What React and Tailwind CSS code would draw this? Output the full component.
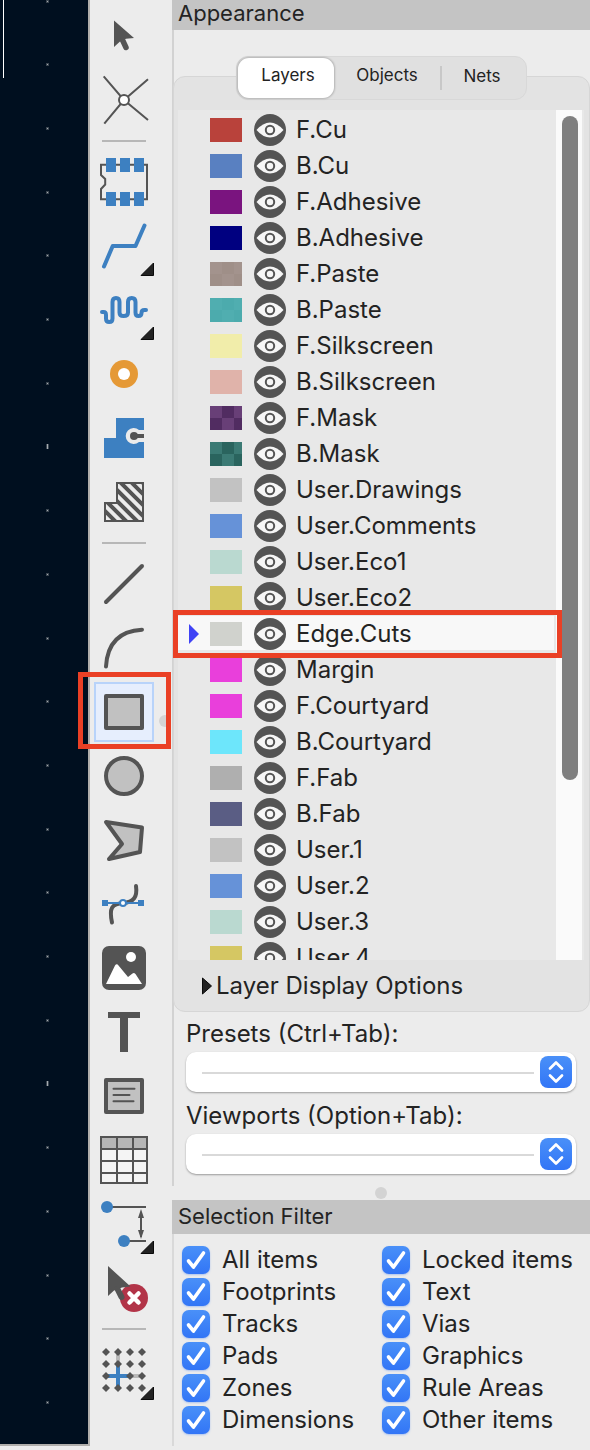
import { useState } from "react";

const INK = "#545454";
const BLUE = "#3d80c1";

const Flyout = () => <path d="M61.5 49V61.5H49Z" fill="#222" stroke="#0a0a0a" />;

const icons = {
  select: (
    <g fill={INK}>
      <path d="M22 16.5V43L28 37.5L34 34.7L42 34Z" />
      <path d="M30.5 36L34 43.5" stroke={INK} strokeWidth="5.5" strokeLinecap="round" />
    </g>
  ),
  ratsnest: (
    <g stroke={INK} strokeWidth="2" fill="#fff">
      <path d="M11.7 8.3L32 32L12.3 55.7M56 11.3L32 32L56 52" fill="none" />
      <circle cx="32" cy="32" r="5" />
    </g>
  ),
  footprint: (
    <g>
      <path d="M9 14.7H55V49.2H9V39L13.2 34.5V29L9 25Z" fill="none" stroke={INK} strokeWidth="2" />
      <path d="M14 8h10v14H14zM28 8h10v14H28zM42 8h10v14H42zM14 42h10v14H14zM28 42h10v14H28zM42 42h10v14H42z" fill={BLUE} />
    </g>
  ),
  track: (
    <g>
      <path d="M12 52.5L20.7 32H43.5L52.5 11.5" fill="none" stroke={BLUE} strokeWidth="4" strokeLinecap="round" strokeLinejoin="round" />
      <Flyout />
    </g>
  ),
  tune: (
    <g>
      <path d="M10 34H11.5Q14 34 14 37V40.500Q14 44 17.200 44Q20.500 44 20.500 40.500V24Q20.500 20 24 20Q27.500 20 27.500 24V34.500Q27.500 38 31.500 38Q36 38 36 34.500V24Q36 20 39.700 20Q43.500 20 43.500 24V34.500Q43.500 38 46.500 38Q49.500 38 49.500 35Q49.500 32 52.500 32H54" fill="none" stroke={BLUE} strokeWidth="4" strokeLinecap="round" />
      <Flyout />
    </g>
  ),
  via: (
    <g>
      <circle cx="32" cy="32" r="14" fill="#e59936" />
      <circle cx="32" cy="32" r="6" fill="#fff" />
    </g>
  ),
  zone: (
    <g>
      <path d="M24 12H52V52H12V32H24Z" fill={BLUE} />
      <path d="M52 24H47A8 8 0 1 0 47 36H52Z" fill="#ebebeb" />
      <circle cx="42" cy="30" r="4" fill={INK} />
      <path d="M42 30H52" stroke={INK} strokeWidth="4" />
    </g>
  ),
  ruleArea: (
    <g fill="none" stroke={INK}>
      <clipPath id="rule-area">
        <path d="M24 12H52V52H12V32H24Z" />
      </clipPath>
      <path d="M48 10L98 60M37 10L87 60M26 10L76 60M15 10L65 60M4 10L54 60M-7 10L43 60M-18 10L32 60" strokeWidth="4" clipPath="url(#rule-area)" />
      <path d="M25 13H51V51H13V33H25Z" strokeWidth="2" />
    </g>
  ),
  line: <path d="M14 50L50 14" stroke={INK} strokeWidth="4" strokeLinecap="round" />,
  arc: <path d="M14 50.500Q16 15.500 50 13.700" fill="none" stroke={INK} strokeWidth="4" strokeLinecap="round" />,
  rect: <rect x="14" y="16" width="36" height="32" fill="#c1c1c1" stroke={INK} strokeWidth="4" strokeLinejoin="round" />,
  circle: <circle cx="32" cy="32" r="18" fill="#c1c1c1" stroke={INK} strokeWidth="4" />,
  polygon: (
    <path d="M14 14L50 19.500L48 44L17 51L30 36Z" fill="#c1c1c1" stroke={INK} strokeWidth="4" strokeLinejoin="round" />
  ),
  bezier: (
    <g fill="none">
      <path d="M20 50.500C17 36 19.500 32 31 31C42 30 45.500 25 44 14" stroke={INK} strokeWidth="4" strokeLinecap="round" />
      <path d="M12 31H50" stroke={BLUE} strokeWidth="2" />
      <path d="M10 28h6v6h-6zM46 28h6v6h-6z" fill={BLUE} />
      <circle cx="31" cy="31" r="3" fill="#fff" stroke={BLUE} strokeWidth="2" />
    </g>
  ),
  image: (
    <g fill="#fff">
      <rect x="10" y="10" width="44" height="44" rx="7" fill={INK} />
      <circle cx="39" cy="21" r="5" />
      <path d="M14 48L23 29.500Q24.700 27 26.500 29.500L36 41L40.500 37.500Q42 36.500 43.500 38L50 48Z" />
    </g>
  ),
  text: <path d="M16 12H48V18H36V52H28V18H16Z" fill={INK} />,
  textbox: (
    <g stroke={INK}>
      <rect x="14" y="16" width="36" height="32" fill="#c1c1c1" strokeWidth="4" strokeLinejoin="round" />
      <path d="M21.500 24.700H42.500M21.500 31H37.500M21.500 37.300H41.500" strokeWidth="2" strokeLinecap="round" />
    </g>
  ),
  table: (
    <g>
      <path d="M9 9H55V55H9Z" fill="#f4f4f4" />
      <path d="M9 9H55V21H9Z" fill="#b6b6b6" />
      <path d="M9 9H55V55H9ZM9 21H55M9 33H55M9 45H55M25 9V55M41 9V55" fill="none" stroke={INK} strokeWidth="2" />
    </g>
  ),
  dimension: (
    <g>
      <path d="M15 15H54M32 49H54M49 20V45" stroke={INK} strokeWidth="2" />
      <path d="M49 17L52 26H46ZM49 47L52 38H46Z" fill={INK} />
      <circle cx="15" cy="15" r="6" fill={BLUE} />
      <circle cx="32" cy="49" r="6" fill={BLUE} />
      <Flyout />
    </g>
  ),
  remove: (
    <g>
      <circle cx="42" cy="42" r="14" fill="#b23448" />
      <path d="M16 10V40L22 34.500L30 31.500L38.500 30.500Z" fill={INK} />
      <path d="M25.500 33L29.500 41" stroke={INK} strokeWidth="6" strokeLinecap="round" />
      <path d="M37.500 37.500L46.500 46.500M46.500 37.500L37.500 46.500" stroke="#fff" strokeWidth="4.500" strokeLinecap="round" />
    </g>
  ),
  grid: (
    <g>
      <path d="M26 14V26M38 38H50" stroke="#b9b9b9" strokeWidth="4" />
      <path d="M14 38H38M26 26V50" stroke={BLUE} strokeWidth="4" />
      {[14, 26, 38, 50].map((y) =>
        [14, 26, 38, 50].map((x) => (
          <path key={`${x}-${y}`} d={`M${x - 4} ${y}L${x} ${y - 4}L${x + 4} ${y}L${x} ${y + 4}Z`} fill={x === 26 && y === 38 ? BLUE : INK} />
        )),
      )}
      <Flyout />
    </g>
  ),
};

const toolGroups = [
  [["select", "Select items"], ["ratsnest", "Local ratsnest"]],
  [
    ["footprint", "Add footprint"],
    ["track", "Route tracks"],
    ["tune", "Tune track length"],
    ["via", "Add via"],
    ["zone", "Add filled zone"],
    ["ruleArea", "Add rule area"],
  ],
  [
    ["line", "Draw line"],
    ["arc", "Draw arc"],
    ["rect", "Draw rectangle"],
    ["circle", "Draw circle"],
    ["polygon", "Draw polygon"],
    ["bezier", "Draw bezier curve"],
    ["image", "Add image"],
    ["text", "Add text"],
    ["textbox", "Add text box"],
    ["table", "Add table"],
    ["dimension", "Add dimension"],
    ["remove", "Delete items"],
  ],
  [["grid", "Set grid origin"]],
];

const layers = [
  ["F.Cu", "#b9423b"],
  ["B.Cu", "#5980c1"],
  ["F.Adhesive", "#7a147f"],
  ["B.Adhesive", "#000080"],
  ["F.Paste", "#a3938d", "#9f8f88"],
  ["B.Paste", "#50aeb0", "#4cabad"],
  ["F.Silkscreen", "#f1edaa"],
  ["B.Silkscreen", "#e0b3aa"],
  ["F.Mask", "#683f77", "#512c61"],
  ["B.Mask", "#3b7a74", "#2a645e"],
  ["User.Drawings", "#c2c2c2"],
  ["User.Comments", "#6692d8"],
  ["User.Eco1", "#bad9d0"],
  ["User.Eco2", "#d5c763"],
  ["Edge.Cuts", "#d0d2cd"],
  ["Margin", "#e93fdb"],
  ["F.Courtyard", "#e93fdb"],
  ["B.Courtyard", "#6de6fb"],
  ["F.Fab", "#afafaf"],
  ["B.Fab", "#5a5d84"],
  ["User.1", "#c2c2c2"],
  ["User.2", "#6692d8"],
  ["User.3", "#bad9d0"],
  ["User.4", "#d5c763"],
];

const filters = [
  "All items", "Locked items",
  "Footprints", "Text",
  "Tracks", "Vias",
  "Pads", "Graphics",
  "Zones", "Rule Areas",
  "Dimensions", "Other items",
];

function Board() {
  return (
    <div className="relative mb-1 w-[90px] shrink-0 border-r-2 border-b-2 border-[#b0aeab] bg-[#000f1f]">
      <svg className="absolute inset-0 h-full w-full" aria-hidden="true">
        <path d="M3.500 0V78" stroke="#fff" />
        {Array.from({ length: 23 }, (_, i) => {
          const y = Math.round(0.5 + i * 63.7);
          const tall = i % 10 === 7;
          return (
            <g key={i}>
              <rect x="46" y={tall ? y - 2 : y - 1} width="3" height={tall ? 5 : 3} fill="#3a4550" />
              <rect x="47" y={tall ? y - 2 : y} width="1" height={tall ? 5 : 1} fill="#a5abb0" />
            </g>
          );
        })}
      </svg>
    </div>
  );
}

function Toolbar() {
  const [active, setActive] = useState("rect");
  return (
    <nav aria-label="Drawing tools" className="relative flex w-[82px] shrink-0 flex-col px-0.5 pt-1">
      {toolGroups.map((group, g) => (
        <div key={g} className="flex flex-col">
          {g > 0 && <hr className="my-2 ml-2.5 w-11 border-t-2 border-[#b7b7b7]" />}
          {group.map(([id, label]) => (
            <div key={id} className="relative h-16">
              {id === "rect" && <span className="absolute top-[35px] left-[67px] size-3 rounded-full bg-[#d4d4d4]" />}
              <button
                type="button"
                aria-label={label}
                aria-pressed={active === id}
                onClick={() => setActive(id)}
                className="group relative block size-16"
              >
                <span className="absolute inset-0.5 border-2 border-transparent group-aria-pressed:border-[#b8d3fa] group-aria-pressed:bg-[#e6eefd]" />
                <svg viewBox="0 0 64 64" className="relative size-16">{icons[id]}</svg>
              </button>
              {id === "rect" && (
                <span className="pointer-events-none absolute -top-2 -left-3.5 z-10 h-[77px] w-[93px] border-[5px] border-[#ea4025]" />
              )}
            </div>
          ))}
        </div>
      ))}
    </nav>
  );
}

function Swatch({ a, b }) {
  return (
    <svg viewBox="0 0 32 24" className="h-6 w-8 shrink-0" aria-hidden="true">
      <path d="M0 0H32V24H0Z" fill={a} />
      {b && <path d="M12 0H24V12H12ZM0 12H12V24H0ZM24 12H32V24H24Z" fill={b} />}
    </svg>
  );
}

function Eye() {
  return (
    <svg viewBox="0 0 32 32" className="size-8" aria-hidden="true">
      <circle cx="16" cy="16" r="16" fill={INK} />
      <path d="M2.500 16Q9 8.500 16 8.500T29.500 16Q23 23.500 16 23.500T2.500 16Z" fill="#f6f6f6" />
      <circle cx="16" cy="16" r="4.200" fill="#f6f6f6" stroke={INK} strokeWidth="2" />
    </svg>
  );
}

function LayerList() {
  return (
    <div className="relative mr-[5px] ml-1">
      <div className="flex h-[850px] overflow-hidden bg-[#e8e8e8]">
        <ul className="flex-1 pt-0.5">
          {layers.map(([name, a, b]) => {
            const current = name === "Edge.Cuts";
            return (
              <li key={name} className={current ? "mr-0.5 border-b-2 border-[#e8e8e8] bg-[#f8f8f8]" : "mr-0.5 border-b-2 border-transparent"}>
                <div className="flex h-[34px] items-center pt-0.5">
                  <span className="flex w-8 justify-center">
                    {current && (
                      <svg viewBox="0 0 10 20" className="h-5 w-2.5" aria-hidden="true">
                        <path d="M0 0L10 10L0 20Z" fill="#4043f5" />
                      </svg>
                    )}
                  </span>
                  <Swatch a={a} b={b} />
                  <button type="button" aria-label={`Toggle ${name}`} className="mr-2.5 ml-3 shrink-0">
                    <Eye />
                  </button>
                  <span className="text-2xl leading-8">{name}</span>
                </div>
              </li>
            );
          })}
        </ul>
        <div className="mr-0.5 w-[26px] bg-[#fafafa] pt-1.5 pr-1 pl-1.5">
          <div className="h-[664px] w-4 rounded-full bg-[#7f7f7f]" />
        </div>
      </div>
      <span className="pointer-events-none absolute top-[500px] right-[22px] -left-[5px] h-12 border-[5px] border-[#ea4025]" />
    </div>
  );
}

function Appearance() {
  const [tab, setTab] = useState("Layers");
  return (
    <section>
      <h2 className="h-[30px] bg-[#c4c4c4] pl-1.5 text-[22px] leading-[26px]">Appearance</h2>
      <div className="border-l-2 border-[#d2d2d2] pt-[46px]">
        <div className="relative -ml-px rounded-xl border border-[#d6d6d6] bg-[#e3e3e3]">
          <div className="-mt-[21px] flex justify-center">
            <div role="tablist" className="flex h-11 items-center rounded-xl border border-[#d8d8d8] bg-[#e0e0e0] pl-px">
              {["Layers", "Objects", "Nets"].map((name) => (
                <button
                  key={name}
                  type="button"
                  role="tab"
                  aria-selected={tab === name}
                  onClick={() => setTab(name)}
                  className={
                    tab === name
                      ? "h-10 w-[96px] rounded-[11px] bg-white pb-1 pl-1 text-[17px] shadow-[0_0_2px_1px_rgba(0,0,0,0.2)]"
                      : name === "Nets"
                        ? "h-6 w-[86px] border-l-2 border-[#c8c8c8] pr-1 pb-1 text-[17px] leading-5"
                        : "h-10 w-[106px] pb-1 text-[17px]"
                  }
                >
                  {name}
                </button>
              ))}
            </div>
          </div>
          <div className="pt-2.5">
            <LayerList />
          </div>
          <button type="button" className="flex h-[51px] items-center gap-1 pl-7 text-2xl">
            <svg viewBox="0 0 10 18" className="h-[18px] w-2.5" aria-hidden="true">
              <path d="M0.500 1L9.500 9L0.500 17Z" fill="#222" stroke="#0a0a0a" />
            </svg>
            Layer Display Options
          </button>
        </div>
        <div className="flex flex-col gap-2 pt-1.5 pr-3.5 pb-3 pl-3">
          <Picker id="presets" label="Presets (Ctrl+Tab):" />
          <Picker id="viewports" label="Viewports (Option+Tab):" />
        </div>
      </div>
      <div className="flex h-3.5 items-center justify-center">
        <span className="size-3 rounded-full bg-[#d3d3d3]" />
      </div>
    </section>
  );
}

function Picker({ id, label }) {
  return (
    <div>
      <label htmlFor={id} className="block h-[34px] text-2xl leading-8">{label}</label>
      <div className="relative">
        <select id={id} className="block h-10 w-full appearance-none rounded-[10px] bg-white shadow-[0_1px_2px_rgba(0,0,0,0.35)]">
          <option value="" />
        </select>
        <span className="pointer-events-none absolute inset-x-4 top-5 mr-[26px] h-0.5 bg-[#d9d9d9]" />
        <span className="pointer-events-none absolute top-1 right-1 size-8 rounded-lg bg-linear-to-b from-[#4a90f8] to-[#3275f6]">
          <svg viewBox="0 0 32 32" className="size-8" aria-hidden="true">
            <path d="M10 12.500L16 6.500L22 12.500M10 19.500L16 25.500L22 19.500" fill="none" stroke="#fff" strokeWidth="2.700" strokeLinecap="round" strokeLinejoin="round" />
          </svg>
        </span>
      </div>
    </div>
  );
}

function SelectionFilter() {
  return (
    <section className="flex flex-1 flex-col pb-1">
      <h2 className="h-[34px] bg-[#c4c4c4] pl-1.5 text-[22px] leading-8">Selection Filter</h2>
      <div className="grid flex-1 grid-cols-[200px_1fr] content-start border-l-2 border-[#d9d9d9] pt-2.5 pl-2">
        {filters.map((name) => (
          <label key={name} className="flex h-8 items-center gap-3 whitespace-nowrap">
            <span className="relative size-7 shrink-0">
              <input
                type="checkbox"
                defaultChecked
                className="peer block size-7 appearance-none rounded-[7px] bg-white shadow-[0_1px_2px_rgba(50,117,246,0.35)] checked:bg-linear-to-b checked:from-[#4a90f8] checked:to-[#3275f6]"
              />
              <svg viewBox="0 0 28 28" className="pointer-events-none absolute inset-0 hidden size-7 peer-checked:block" aria-hidden="true">
                <path d="M6.500 15L11.500 21L21.500 7" fill="none" stroke="#fff" strokeWidth="3.600" strokeLinecap="round" strokeLinejoin="round" />
              </svg>
            </span>
            <span className="text-2xl leading-8">{name}</span>
          </label>
        ))}
      </div>
    </section>
  );
}

export default function App() {
  return (
    <main className="flex min-h-screen bg-[#ececec] font-[Inter,'Liberation_Sans',sans-serif] text-[#232323]">
      <Board />
      <Toolbar />
      <div className="flex min-w-0 flex-1 flex-col">
        <Appearance />
        <SelectionFilter />
      </div>
    </main>
  );
}
